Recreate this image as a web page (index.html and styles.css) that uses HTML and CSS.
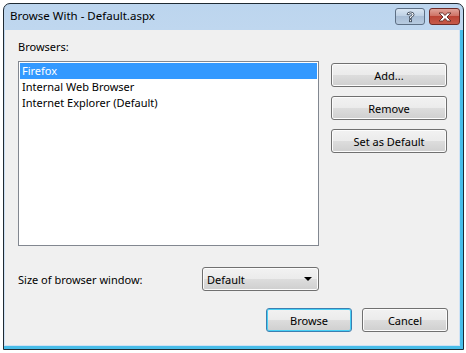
FILE: index.html
```html
<!DOCTYPE html>
<html lang="en">
<head>
    <meta charset="UTF-8">
    <title>Browse With - Default.aspx</title>
    <link rel="stylesheet" href="styles.css">
</head>
<body>
    <div class="window">
        <div class="title-bar">
            <span class="title">Browse With - Default.aspx</span>
            <div class="caption-buttons">
                <div class="cap-btn help-btn">
                    <svg width="11" height="12" viewBox="0 0 11 12">
                        <path d="M2 3.5 Q2 1 5.5 1 Q9 1 9 3.5 Q9 5.5 6.5 6.2 L6.5 7.5 L4.5 7.5 L4.5 5.4 Q7 5 7 3.6 Q7 2.6 5.5 2.6 Q4 2.6 4 3.8 Z" fill="#fff" stroke="#3d4a5a" stroke-width="0.9"/>
                        <rect x="4.5" y="8.7" width="2" height="2" fill="#fff" stroke="#3d4a5a" stroke-width="0.9"/>
                    </svg>
                </div>
                <div class="cap-btn close-btn">
                    <svg width="14" height="10" viewBox="0 0 14 10">
                        <path d="M1 1 L4.5 1 L7 3.4 L9.5 1 L13 1 L9 5 L13 9 L9.5 9 L7 6.6 L4.5 9 L1 9 L5 5 Z" fill="#fff" stroke="#5a2a26" stroke-width="0.9" stroke-linejoin="round"/>
                    </svg>
                </div>
            </div>
        </div>
        <div class="frame">
            <div class="content">
                <div class="label">Browsers:</div>
                <div class="main-row">
                    <div class="listbox">
                        <div class="item selected">Firefox</div>
                        <div class="item">Internal Web Browser</div>
                        <div class="item">Internet Explorer (Default)</div>
                    </div>
                    <div class="side-buttons">
                        <div class="btn">Add...</div>
                        <div class="btn">Remove</div>
                        <div class="btn">Set as Default</div>
                    </div>
                </div>
                <div class="size-row">
                    <span class="size-label">Size of browser window:</span>
                    <div class="dropdown">
                        <span>Default</span>
                        <span class="arrow"></span>
                    </div>
                </div>
                <div class="footer">
                    <div class="btn btn-default">Browse</div>
                    <div class="btn">Cancel</div>
                </div>
            </div>
        </div>
    </div>
</body>
</html>
```

FILE: styles.css
```css
/* Dialog window in the Vista basic look */
html, body {
    margin: 0;
    background-color: #ffffff;
}
body {
    font-family: "Noto Sans", "Open Sans", sans-serif;
    font-size: 11px;
    color: #000000;
}
.window {
    margin: 3px;
    width: 461px;
    height: 347px;
    box-sizing: border-box;
    border: 1px solid #1f2a33;
    border-radius: 7px 7px 0 0;
    background: linear-gradient(#bcd5ee, #c9ddf2 30%, #cfe2f5);
    display: flex;
    flex-direction: column;
    overflow: hidden;
}
.title-bar {
    height: 26px;
    display: flex;
    align-items: flex-start;
    justify-content: space-between;
    padding: 0 3px 0 6px;
}
.title {
    margin-top: 4px;
    line-height: 16px;
    font-size: 11.5px;
}
.caption-buttons {
    display: flex;
    gap: 4px;
    margin-top: 4px;
}
.cap-btn {
    height: 17px;
    box-sizing: border-box;
    border: 1px solid #5d6f84;
    border-radius: 3px;
    display: flex;
    align-items: center;
    justify-content: center;
}
.help-btn {
    width: 30px;
    background: linear-gradient(#d9e6f3, #bccfe3 50%, #a9bed6 50%, #b7cbe0);
}
.close-btn {
    width: 31px;
    border-color: #6e2c28;
    background: linear-gradient(#e0a39a, #cd6d60 50%, #bb4335 50%, #c65a4a);
}
.frame {
    flex: 1;
    display: flex;
    padding: 0 0 0 1px;
    border-right: 3px solid #48bde9;
    border-bottom: 3px solid #48bde9;
    box-shadow: inset -1px -1px 0 #cfe2f5;
}
.content {
    flex: 1;
    margin: 0 1px 1px 0;
    background-color: #f0f0f0;
    padding: 9px 11px 0 13px;
}
.label {
    line-height: 15px;
}
.main-row {
    display: flex;
    margin-top: 7px;
}
.listbox {
    width: 301px;
    height: 185px;
    box-sizing: border-box;
    border: 1px solid #828790;
    background-color: #ffffff;
    padding: 1px;
}
.item {
    height: 16px;
    line-height: 16px;
    padding-left: 2px;
}
.item.selected {
    background-color: #3399ff;
    color: #ffffff;
}
.side-buttons {
    display: flex;
    flex-direction: column;
    gap: 9px;
    margin: 2px 0 0 12px;
}
.btn {
    width: 116px;
    height: 24px;
    box-sizing: border-box;
    border: 1px solid #707070;
    border-radius: 3px;
    background: linear-gradient(#f2f2f2, #ebebeb 50%, #dddddd 50%, #cfcfcf);
    box-shadow: inset 0 0 0 1px #fcfcfc;
    display: flex;
    align-items: center;
    justify-content: center;
}
.size-row {
    display: flex;
    align-items: center;
    justify-content: space-between;
    width: 301px;
    margin-top: 21px;
}
.dropdown {
    width: 117px;
    height: 24px;
    box-sizing: border-box;
    border: 1px solid #707070;
    border-radius: 3px;
    background: linear-gradient(#f2f2f2, #ebebeb 50%, #dddddd 50%, #cfcfcf);
    box-shadow: inset 0 0 0 1px #fcfcfc;
    display: flex;
    align-items: center;
    justify-content: space-between;
    padding: 0 6px 0 4px;
}
.arrow {
    width: 0;
    height: 0;
    border-left: 4px solid transparent;
    border-right: 4px solid transparent;
    border-top: 4px solid #000000;
}
.footer {
    display: flex;
    justify-content: flex-end;
    gap: 10px;
    margin-top: 17px;
}
.footer .btn {
    width: 86px;
    height: 24px;
}
.btn-default {
    border-color: #3c7fb1;
    box-shadow: inset 0 0 0 1px #48d0f5;
}
```
